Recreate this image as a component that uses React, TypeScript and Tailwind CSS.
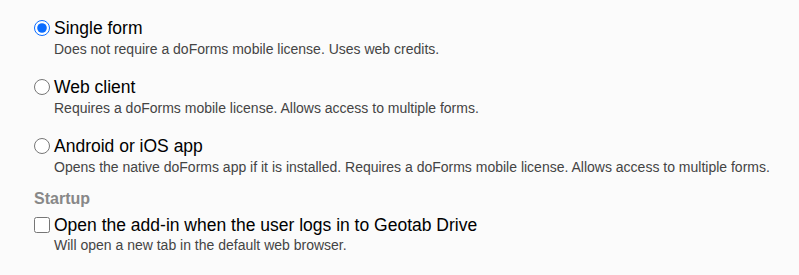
import React, { useState } from 'react';

const options = [
  { id: 'single', label: 'Single form', desc: 'Does not require a doForms mobile license. Uses web credits.' },
  { id: 'web', label: 'Web client', desc: 'Requires a doForms mobile license. Allows access to multiple forms.' },
  {
    id: 'app',
    label: 'Android or iOS app',
    desc: 'Opens the native doForms app if it is installed. Requires a doForms mobile license. Allows access to multiple forms.',
  },
];

export default function App() {
  const [mode, setMode] = useState('single');
  const [startup, setStartup] = useState(false);

  return (
    <div className="min-h-[275px] w-full bg-[#fbfbfb] pl-[34px] pt-[17px] text-[#222] [font-family:'Liberation_Sans',Arial,sans-serif]">
      <div className="flex flex-col gap-[17px]">
        {options.map((o) => (
          <div key={o.id}>
            <label className="flex items-center gap-[4px] text-[17.5px] leading-[22px] text-black">
              <input
                type="radio"
                name="mode"
                checked={mode === o.id}
                onChange={() => setMode(o.id)}
                className="m-0 h-[16px] w-[16px] accent-[#0a6cff]"
              />
              {o.label}
            </label>
            <div className="pl-[20px] text-[14px] leading-[20px] text-[#444]">{o.desc}</div>
          </div>
        ))}
      </div>

      <div className="mt-[11px] text-[16px] font-bold leading-[22px] text-[#888]">Startup</div>
      <div className="mt-[4px]">
        <label className="flex items-center gap-[4px] text-[17.5px] leading-[22px] text-black">
          <input
            type="checkbox"
            checked={startup}
            onChange={() => setStartup(!startup)}
            className="m-0 h-[16px] w-[16px]"
          />
          Open the add-in when the user logs in to Geotab Drive
        </label>
        <div className="pl-[20px] text-[14px] leading-[18px] text-[#444]">Will open a new tab in the default web browser.</div>
      </div>
    </div>
  );
}
